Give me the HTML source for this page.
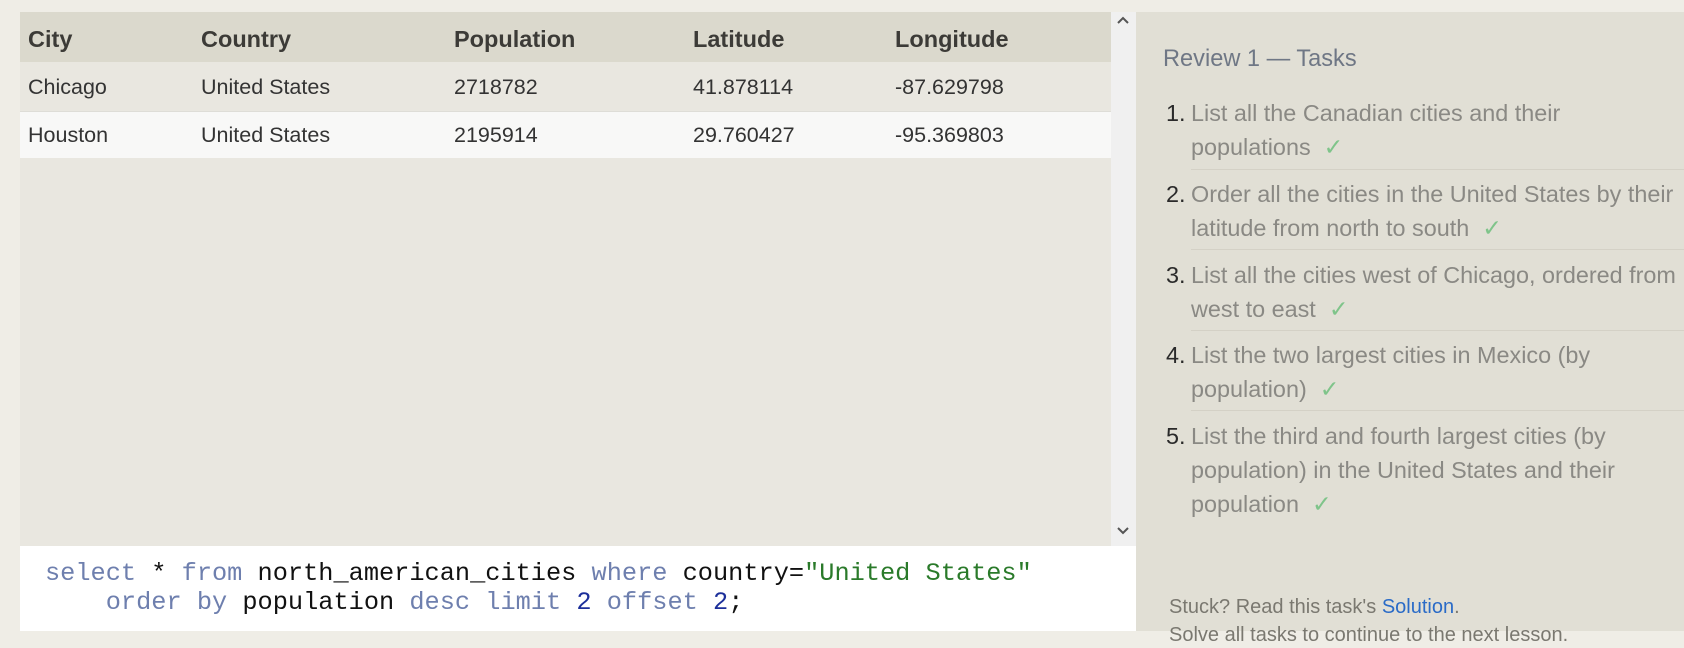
<!DOCTYPE html>
<html style="background:#efede6"><head><meta charset="utf-8"><style>
*{margin:0;padding:0;box-sizing:border-box}
body{width:1684px;height:631px;overflow:hidden;background:#efede6;font-family:"Liberation Sans",sans-serif;position:relative}
.a{position:absolute;white-space:nowrap}
.hd{font-weight:bold;font-size:23.5px;color:#3c3b37;top:24px;line-height:30px}
.c{font-size:21.5px;color:#333;line-height:30px}
.t{font-size:23.4px;color:#8a8984;line-height:34px}
.n{color:#2a2a2a}
.ck{color:#7fc48a}
.ln{position:absolute;left:1191px;right:0;height:1px;background:#d4d1c6}
.code{font-family:"Liberation Mono",monospace;font-size:25.3px;color:#111;line-height:29px;white-space:pre}
.k{color:#6e7fae}.s{color:#2a7a2a}.d{color:#1c2f9a}
</style></head><body>
<div class="a" style="left:20px;top:12px;width:1091px;height:534px;background:#e9e7e0"></div>
<div class="a" style="left:20px;top:12px;width:1091px;height:50px;background:#dbd9cd"></div>
<div class="a" style="left:20px;top:111px;width:1091px;height:47px;background:#f8f8f7;border-top:1px solid #deddd7"></div>
<div class="a" style="left:1111px;top:12px;width:25px;height:534px;background:#f0f0f0"></div>
<svg class="a" style="left:1116px;top:15px" width="14" height="10"><path d="M2 8 L7 3 L12 8" stroke="#555" stroke-width="2" fill="none"/></svg>
<svg class="a" style="left:1116px;top:526px" width="14" height="10"><path d="M2 2 L7 7 L12 2" stroke="#555" stroke-width="2" fill="none"/></svg>
<div class="a hd" style="left:28px">City</div>
<div class="a hd" style="left:201px">Country</div>
<div class="a hd" style="left:454px">Population</div>
<div class="a hd" style="left:693px">Latitude</div>
<div class="a hd" style="left:895px">Longitude</div>
<div class="a c" style="left:28px;top:72px">Chicago</div>
<div class="a c" style="left:201px;top:72px">United States</div>
<div class="a c" style="left:454px;top:72px">2718782</div>
<div class="a c" style="left:693px;top:72px">41.878114</div>
<div class="a c" style="left:895px;top:72px">-87.629798</div>
<div class="a c" style="left:28px;top:120px">Houston</div>
<div class="a c" style="left:201px;top:120px">United States</div>
<div class="a c" style="left:454px;top:120px">2195914</div>
<div class="a c" style="left:693px;top:120px">29.760427</div>
<div class="a c" style="left:895px;top:120px">-95.369803</div>
<div class="a" style="left:20px;top:546px;width:1116px;height:85px;background:#fff"></div>
<div class="a code" style="left:45px;top:559px"><span class="k">select</span> * <span class="k">from</span> north_american_cities <span class="k">where</span> country=<span class="s">"United States"</span></div>
<div class="a code" style="left:45px;top:588px">    <span class="k">order by</span> population <span class="k">desc limit</span> <span class="d">2</span> <span class="k">offset</span> <span class="d">2</span>;</div>
<div class="a" style="left:1136px;top:12px;width:548px;height:619px;background:#e1dfd5"></div>
<div class="a" style="left:1163px;top:44px;font-size:23.6px;line-height:30px;color:#6f7785">Review 1 — Tasks</div>
<div class="a t" style="left:1166px;top:96px"><span class="n">1.</span></div>
<div class="a t" style="left:1191px;top:96px">List all the Canadian cities and their</div>
<div class="a t" style="left:1191px;top:130px">populations &nbsp;<span class="ck">✓</span></div>
<div class="ln" style="top:169px"></div>
<div class="a t" style="left:1166px;top:177px"><span class="n">2.</span></div>
<div class="a t" style="left:1191px;top:177px">Order all the cities in the United States by their</div>
<div class="a t" style="left:1191px;top:211px">latitude from north to south &nbsp;<span class="ck">✓</span></div>
<div class="ln" style="top:249px"></div>
<div class="a t" style="left:1166px;top:258px"><span class="n">3.</span></div>
<div class="a t" style="left:1191px;top:258px">List all the cities west of Chicago, ordered from</div>
<div class="a t" style="left:1191px;top:292px">west to east &nbsp;<span class="ck">✓</span></div>
<div class="ln" style="top:330px"></div>
<div class="a t" style="left:1166px;top:338px"><span class="n">4.</span></div>
<div class="a t" style="left:1191px;top:338px">List the two largest cities in Mexico (by</div>
<div class="a t" style="left:1191px;top:372px">population) &nbsp;<span class="ck">✓</span></div>
<div class="ln" style="top:410px"></div>
<div class="a t" style="left:1166px;top:419px"><span class="n">5.</span></div>
<div class="a t" style="left:1191px;top:419px">List the third and fourth largest cities (by</div>
<div class="a t" style="left:1191px;top:453px">population) in the United States and their</div>
<div class="a t" style="left:1191px;top:487px">population &nbsp;<span class="ck">✓</span></div>
<div class="a" style="left:1169px;top:594px;font-size:20px;line-height:26px;color:#7a7870">Stuck? Read this task's <span style="color:#2a6bc7">Solution</span>.</div>
<div class="a" style="left:1169px;top:622px;font-size:20px;line-height:26px;color:#7a7870">Solve all tasks to continue to the next lesson.</div>
</body></html>
